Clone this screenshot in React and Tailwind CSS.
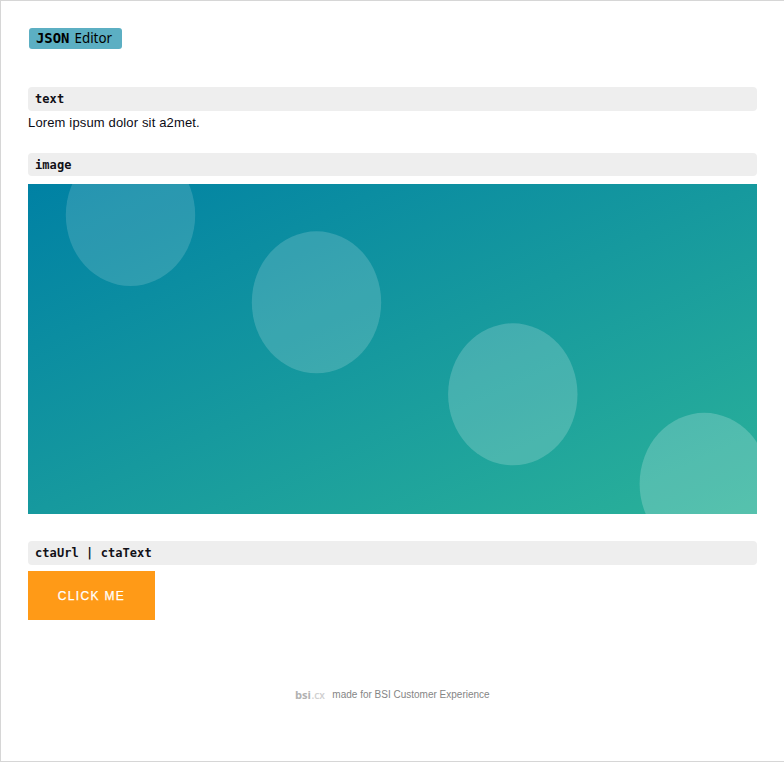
function Label({ children, className = "h-6" }) {
  return (
    <div
      className={`flex items-center rounded-[4px] bg-[#eeeeee] pl-[7px] font-['DejaVu_Sans_Mono',monospace] text-[12px] font-bold tracking-[0.07px] text-[#111118] ${className}`}
    >
      <span className="whitespace-pre">{children}</span>
    </div>
  );
}

function Artwork() {
  return (
    <svg className="mt-2 block h-[330px] w-full" viewBox="0 0 729 330" preserveAspectRatio="none">
      <defs>
        <linearGradient id="sea" x1="0" y1="0" x2="1" y2="1">
          <stop offset="0" stopColor="#0081a4" />
          <stop offset="0.5" stopColor="#16999e" />
          <stop offset="1" stopColor="#2bb299" />
        </linearGradient>
      </defs>
      <rect width="729" height="330" fill="url(#sea)" />
      <g fill="#ffffff">
        <ellipse cx="102.5" cy="31" rx="64.7" ry="71" fillOpacity="0.15" />
        <ellipse cx="288.5" cy="118.3" rx="64.7" ry="71" fillOpacity="0.17" />
        <ellipse cx="484.8" cy="210.3" rx="64.7" ry="71" fillOpacity="0.19" />
        <ellipse cx="676.3" cy="299.8" rx="64.7" ry="71" fillOpacity="0.205" />
      </g>
    </svg>
  );
}

export default function App() {
  return (
    <div className="h-[762px] w-[784px] border-y border-l border-[#d6d6d6] bg-white px-[27px] pt-[27px] font-['Liberation_Sans',Arial,sans-serif]">
      <div className="ml-px flex h-[21px] w-[92.5px] items-center rounded-[3px] bg-[#5cafc3] pl-[7px] text-black">
        <svg width="85" height="21" className="block">
          <text x="0" y="15.2" textLength="33.5" lengthAdjust="spacingAndGlyphs" className="font-['DejaVu_Sans_Mono',monospace] text-[13.5px] font-bold">JSON</text>
          <text x="38.5" y="15.2" textLength="37.5" lengthAdjust="spacingAndGlyphs" className="font-['Noto_Sans',sans-serif] text-[13.8px]">Editor</text>
        </svg>
      </div>
      <Label className="mt-[38px] h-6">text</Label>
      <p className="mt-[2px] h-5 text-[13px] leading-5 tracking-[0.15px] text-[#0b0b14]">Lorem ipsum dolor sit a2met.</p>
      <Label className="mt-5 h-[23px]">image</Label>
      <Artwork />
      <Label className="mt-[27px] h-6">ctaUrl | ctaText</Label>
      <button className="block mt-[6px] h-[49px] w-[127px] bg-[#ff9a17] text-[12px] font-normal tracking-[1.35px] text-white [-webkit-text-stroke:0.25px_white]">
        CLICK ME
      </button>
      <footer className="mt-[66px] flex h-4 items-center justify-center text-[10px] text-[#858585]">
        <svg width="31" height="16" className="mr-[6px] block">
          <text x="0" y="12.5" textLength="16" lengthAdjust="spacingAndGlyphs" className="font-['Open_Sans',sans-serif] text-[10.5px] font-bold" fill="#b2b2b2">bsi</text>
          <text x="16.5" y="12.5" textLength="13.5" lengthAdjust="spacingAndGlyphs" className="font-['Open_Sans',sans-serif] text-[10.5px] font-semibold" fill="#d0d0d0">.cx</text>
        </svg>
        <span>made for BSI Customer Experience</span>
      </footer>
    </div>
  );
}
